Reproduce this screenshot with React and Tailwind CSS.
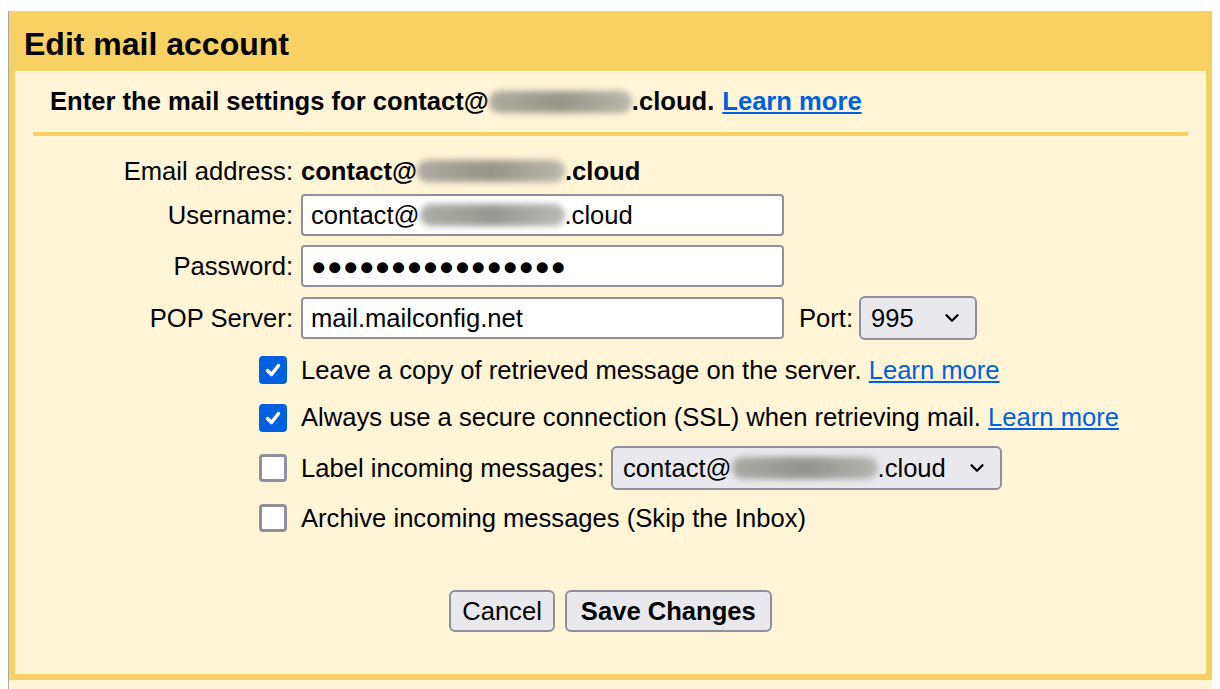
import { ChevronDown } from "lucide-react";

function Blur({ w }) {
  return (
    <span
      className="inline-block h-[22px] rounded-full bg-gradient-to-r from-[#9a9a94] via-[#7d7d78] to-[#a9a9a4] blur-[3px] align-middle opacity-80"
      style={{ width: w }}
    />
  );
}

function Check({ checked }) {
  if (checked) {
    return (
      <span className="flex h-[28px] w-[28px] shrink-0 items-center justify-center rounded-[4px] bg-[#0060df]">
        <svg width="18" height="18" viewBox="0 0 18 18" fill="none">
          <path d="M3.5 9.5 L7.5 13.5 L14.5 4.5" stroke="white" strokeWidth="3.5" strokeLinecap="round" strokeLinejoin="round" />
        </svg>
      </span>
    );
  }
  return <span className="h-[28px] w-[28px] shrink-0 rounded-[4px] border-[3px] border-[#8f8f9d] bg-white" />;
}

export default function App() {
  return (
    <div className="h-[689px] w-[1220px] overflow-hidden bg-white pt-[11px] font-['Liberation_Sans',Arial,sans-serif] text-black">
      <div className="ml-[8px] w-[1204px] border-l border-[#a8a8a8]">
        <div className="w-[1203px] bg-[#f9d063] px-[6px] pb-[6px]">
          <div className="flex h-[60px] items-center pl-[9px] pt-[5px] text-[32px] font-bold">Edit mail account</div>

          <div className="h-[603px] bg-[#fef5d6]">
            {/* heading */}
            <div className="mx-[18px] flex h-[65px] items-center border-b-4 border-[#f9d063] pl-[17px] text-[25.6px] font-bold">
              <span>Enter the mail settings for contact@</span>
              <Blur w={143} />
              <span>.cloud.</span>
              <a href="#" className="ml-[8px] text-[#0060df] underline">Learn more</a>
            </div>

            {/* form */}
            <div className="text-[25.6px]">
              <div className="mt-[15px] flex h-[40px] items-center">
                <span className="w-[278px] text-right">Email address:</span>
                <span className="ml-[8px] flex items-center font-bold">
                  contact@<Blur w={148} />.cloud
                </span>
              </div>

              <div className="mt-[3px] flex items-center">
                <span className="w-[278px] text-right">Username:</span>
                <div className="ml-[8px] flex h-[42px] w-[483px] items-center rounded-[4px] border-2 border-[#8f8f9d] bg-white pl-[8px]">
                  contact@<Blur w={145} />.cloud
                </div>
              </div>

              <div className="mt-[9px] flex items-center">
                <span className="w-[278px] text-right">Password:</span>
                <div className="ml-[8px] flex h-[42px] w-[483px] items-center rounded-[4px] border-2 border-[#8f8f9d] bg-white pl-[8px] tracking-[0.5px]">
                  ●●●●●●●●●●●●●●●●
                </div>
              </div>

              <div className="mt-[9px] flex items-center">
                <span className="w-[278px] text-right">POP Server:</span>
                <div className="ml-[8px] flex h-[42px] w-[483px] items-center rounded-[4px] border-2 border-[#8f8f9d] bg-white pl-[8px]">
                  mail.mailconfig.net
                </div>
                <span className="ml-[15px]">Port:</span>
                <div className="ml-[6px] flex h-[44px] w-[118px] items-center justify-between rounded-[6px] border-2 border-[#8f8f9d] bg-[#e9e9ed] pl-[10px] pr-[12px]">
                  <span>995</span>
                  <ChevronDown size={22} strokeWidth={2.5} />
                </div>
              </div>

              <div className="ml-[244px] mt-[6px]">
                <div className="flex h-[48px] items-center gap-[14px]">
                  <Check checked />
                  <span>
                    Leave a copy of retrieved message on the server.{" "}
                    <a href="#" className="text-[#0060df] underline">Learn more</a>
                  </span>
                </div>
                <div className="flex h-[47px] items-center gap-[14px]">
                  <Check checked />
                  <span>
                    Always use a secure connection (SSL) when retrieving mail.{" "}
                    <a href="#" className="text-[#0060df] underline">Learn more</a>
                  </span>
                </div>
                <div className="flex h-[54px] items-center gap-[14px]">
                  <Check />
                  <span>Label incoming messages:</span>
                  <div className="-ml-[7px] flex h-[44px] w-[391px] items-center justify-between rounded-[6px] border-2 border-[#8f8f9d] bg-[#e9e9ed] pl-[10px] pr-[12px]">
                    <span className="flex items-center">
                      contact@<Blur w={146} />.cloud
                    </span>
                    <ChevronDown size={22} strokeWidth={2.5} />
                  </div>
                </div>
                <div className="flex h-[46px] items-center gap-[14px]">
                  <Check />
                  <span>Archive incoming messages (Skip the Inbox)</span>
                </div>
              </div>

              <div className="mt-[49px] flex justify-center gap-[10px]">
                <button className="h-[42px] rounded-[6px] border-2 border-[#8f8f9d] bg-[#e9e9ed] px-[11px]">Cancel</button>
                <button className="h-[42px] rounded-[6px] border-2 border-[#8f8f9d] bg-[#e9e9ed] px-[14px] font-bold">Save Changes</button>
              </div>
            </div>
          </div>
        </div>
        <div className="h-[20px] w-[1203px] bg-[#fef5d6]" />
      </div>
    </div>
  );
}
